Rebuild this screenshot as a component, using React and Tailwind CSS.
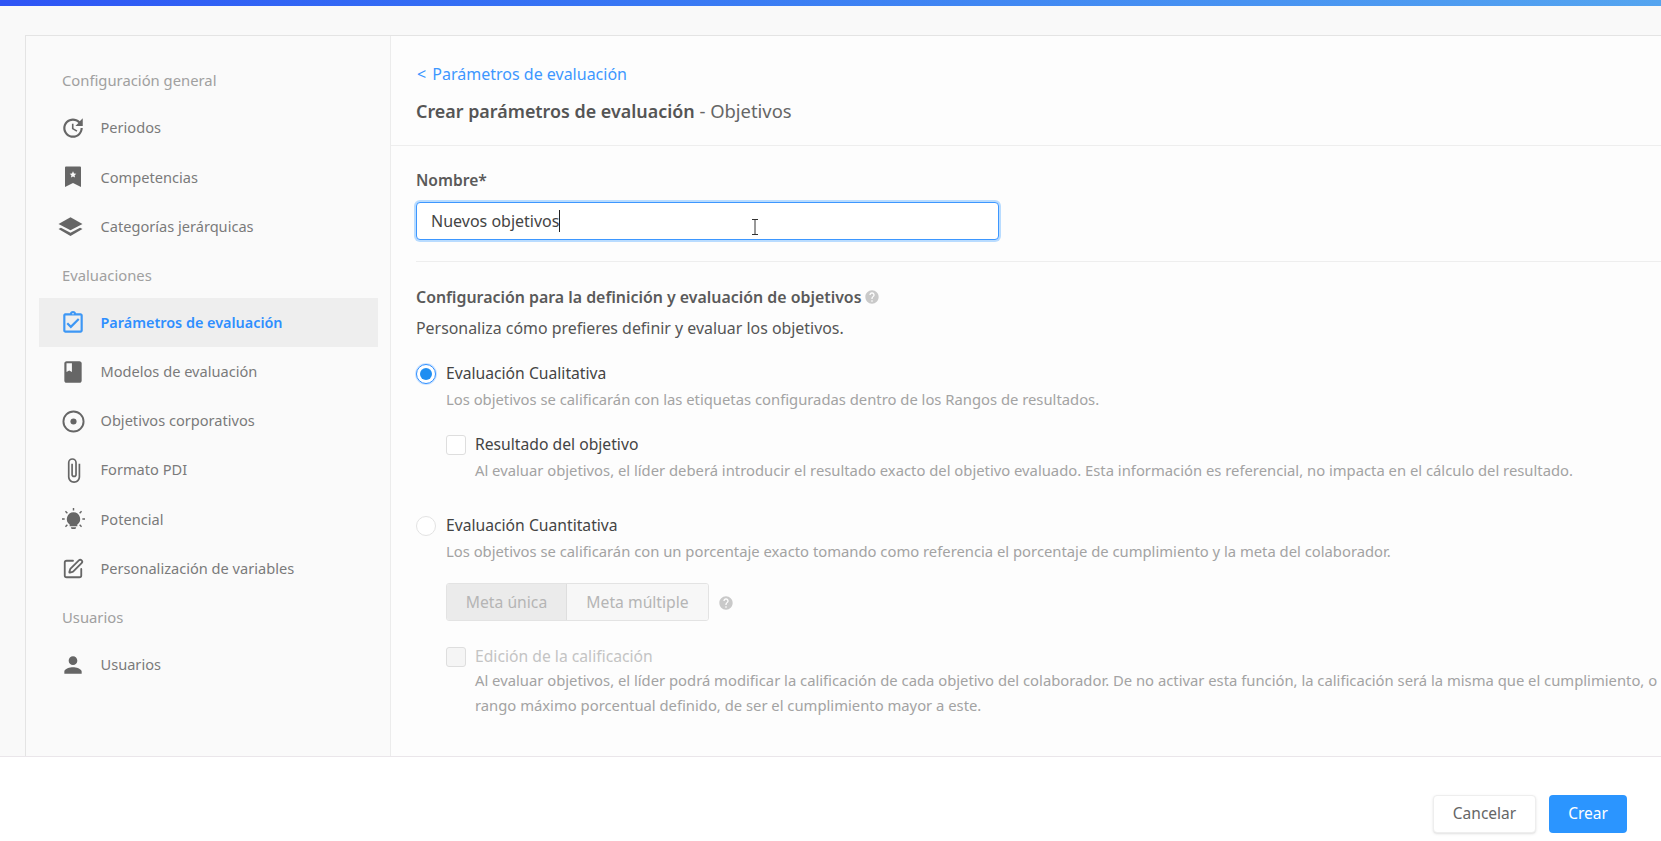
import React from 'react';
import { MdUpdate, MdOutlineAssignmentTurnedIn, MdBook, MdAttachFile, MdPerson, MdHelp } from 'react-icons/md';
import { SquarePen } from 'lucide-react';

// Bookmark with a small star, no package has this one
const BookmarkStar = ({ className }) => (
    <svg viewBox="0 0 24 24" className={className} fill="currentColor">
        <path fillRule="evenodd" d="M5 1.5h14a1 1 0 0 1 1 1V22l-8-4-8 4V2.5a1 1 0 0 1 1-1Zm7 4.700-1 2.200-2.300.3 1.700 1.600-.4 2.300 2-1.200 2 1.200-.4-2.300 1.700-1.600-2.300-.3-1-2.200Z" />
    </svg>
);

const FlatLayers = ({ className }) => (
    <svg viewBox="0 0 24 24" className={className} fill="currentColor">
        <path d="M12 3 23.500 9.500 12 15.500.5 9.500 12 3Z" />
        <path d="M2.800 13.200.5 14.500 12 21l11.500-6.500-2.300-1.300L12 18 2.800 13.200Z" />
    </svg>
);

const TargetDot = ({ className }) => (
    <svg viewBox="0 0 24 24" className={className} fill="none" stroke="currentColor">
        <circle cx="12" cy="12" r="10.500" strokeWidth="2" />
        <circle cx="12" cy="12" r="3.200" fill="currentColor" stroke="none" />
    </svg>
);

const Bulb = ({ className }) => (
    <svg viewBox="0 0 24 24" className={className} fill="currentColor">
        <path d="M12 4.500a7 7 0 0 0-4 12.700V19h8v-1.800a7 7 0 0 0-4-12.700ZM9.200 20h5.600l-.8 1.800h-4L9.200 20Z" />
        <path d="M12 0v2.600M0 11.500h2.800M21.200 11.500H24M3.600 3.400l2 2M20.400 3.400l-2 2M3.600 19.600l2-2M20.400 19.600l-2-2" stroke="currentColor" strokeWidth="1.500" fill="none" />
    </svg>
);

const Heading = ({ children }) => (
    <div className="h-[46.5px] pl-[23px] flex items-center text-[14.8px] text-[#a0a0a0]">{children}</div>
);

const Item = ({ icon: Icon, size = 'w-[26px] h-[26px]', shift = '', active, children }) => (
    <div className={`h-[49.3px] pl-[21px] flex items-center ${active ? 'bg-[#eeeeee] text-[#2f8fff] font-semibold' : 'text-[#7a7a7a]'}`}>
        <div className={`w-[26px] flex justify-center shrink-0 ${shift} ${active ? 'text-[#3d97f5]' : 'text-[#666666]'}`}>
            <Icon className={`${size} shrink-0`} />
        </div>
        <span className={`ml-[14.5px] ${active ? 'text-[14.4px]' : 'text-[14.6px]'}`}>{children}</span>
    </div>
);

const Sidebar = () => (
    <aside className="w-[365px] shrink-0 border-r border-[#ececec] pl-[13px] pr-[12px] pt-[21px]">
        <Heading>Configuración general</Heading>
        <Item icon={MdUpdate}>Periodos</Item>
        <Item icon={BookmarkStar} size="w-[24px] h-[24px]">Competencias</Item>
        <Item icon={FlatLayers} shift="-ml-[3px] mr-[3px]" size="w-[25px] h-[25px]">Categorías jerárquicas</Item>
        <Heading>Evaluaciones</Heading>
        <Item icon={MdOutlineAssignmentTurnedIn} active>Parámetros de evaluación</Item>
        <Item icon={MdBook}>Modelos de evaluación</Item>
        <Item icon={TargetDot} size="w-[23px] h-[23px]">Objetivos corporativos</Item>
        <Item icon={MdAttachFile} size="w-[27px] h-[27px]">Formato PDI</Item>
        <Item icon={Bulb} size="w-[23px] h-[23px]">Potencial</Item>
        <Item icon={SquarePen} size="w-[22px] h-[22px]">Personalización de variables</Item>
        <Heading>Usuarios</Heading>
        <Item icon={MdPerson}>Usuarios</Item>
    </aside>
);

const Radio = ({ checked }) => (
    <span className={`w-[20px] h-[20px] rounded-full border bg-white flex items-center justify-center shrink-0 ${checked ? 'border-[#2f8fff] shadow-[0_0_0_1px_#cfe5ff]' : 'border-[#e3e3e3]'}`}>
        {checked && <span className="w-[12px] h-[12px] rounded-full bg-[#1f8ef1]" />}
    </span>
);

const Checkbox = ({ disabled }) => (
    <span className={`w-[20px] h-[20px] rounded-[3px] border border-[#dedede] shrink-0 ${disabled ? 'bg-[#f5f5f5]' : 'bg-white'}`} />
);

const Main = () => (
    <main className="flex-1 min-w-0 overflow-hidden bg-[#fdfdfd]">
        <div className="h-[110px] pl-[25px] pt-[27px] border-b border-[#eeeeee]">
            <a className="block text-[16px] leading-[22px] text-[#3d97ff]">
                <span className="ml-px mr-[2px]">&lt;</span> Parámetros de evaluación
            </a>
            <div className="mt-[15px] text-[18.4px] leading-[22px] text-[#666666]">
                <span className="font-semibold text-[17.9px] text-[#555555]">Crear parámetros de evaluación</span> - Objetivos
            </div>
        </div>

        <div className="pl-[25px]">
            <div className="pt-[23px] text-[15.6px] leading-[22px] font-semibold text-[#5a5a5a]">Nombre*</div>
            <div className="relative mt-[11px] w-[583px] h-[38px] rounded-[4px] border border-[#3d97ff] bg-white shadow-[0_0_0_2px_#b9dcff] flex items-center px-[14px]">
                <span className="text-[16px] text-[#444444] border-r border-[#222222] leading-[22px]">Nuevos objetivos</span>
                <svg viewBox="0 0 8 16" className="absolute left-[334px] top-[16px] w-[8px] h-[16px]" fill="none" stroke="#333333" strokeWidth="1">
                    <path d="M1 .5h6M1 15.500h6M4 .5v15" />
                </svg>
            </div>
            <div className="mt-[21px] h-px bg-[#eeeeee]" />

            <div className="mt-[24px] flex items-center text-[15.9px] leading-[22px] font-semibold text-[#5a5a5a]">
                Configuración para la definición y evaluación de objetivos
                <MdHelp className="ml-[3px] w-[16px] h-[16px] text-[#c9c9c9]" />
            </div>
            <div className="mt-[9px] text-[15.9px] leading-[22px] text-[#555555]">Personaliza cómo prefieres definir y evaluar los objetivos.</div>

            <div className="mt-[24px] flex items-center gap-[10px] h-[22px]">
                <Radio checked />
                <span className="text-[15.7px] text-[#444444]">Evaluación Cualitativa</span>
            </div>
            <div className="ml-[30px] mt-[3px] text-[14.8px] leading-[22px] text-[#a3a3a3] whitespace-nowrap">
                Los objetivos se calificarán con las etiquetas configuradas dentro de los Rangos de resultados.
            </div>

            <div className="ml-[30px] mt-[24px] flex items-center gap-[9px] h-[22px]">
                <Checkbox />
                <span className="text-[15.7px] text-[#444444]">Resultado del objetivo</span>
            </div>
            <div className="ml-[59px] mt-[3px] text-[14.8px] leading-[22px] text-[#a3a3a3] whitespace-nowrap">
                Al evaluar objetivos, el líder deberá introducir el resultado exacto del objetivo evaluado. Esta información es referencial, no impacta en el cálculo del resultado.
            </div>

            <div className="mt-[34px] flex items-center gap-[10px] h-[22px]">
                <Radio />
                <span className="text-[15.7px] text-[#444444]">Evaluación Cuantitativa</span>
            </div>
            <div className="ml-[30px] mt-[3px] text-[14.8px] leading-[22px] text-[#a3a3a3] whitespace-nowrap">
                Los objetivos se calificarán con un porcentaje exacto tomando como referencia el porcentaje de cumplimiento y la meta del colaborador.
            </div>

            <div className="ml-[30px] mt-[21px] flex items-center">
                <div className="flex h-[38px] rounded-[3px] border border-[#e3e3e3] text-[15.7px] text-[#b5b5b5] overflow-hidden">
                    <div className="w-[120px] bg-[#ebebeb] border-r border-[#dedede] flex items-center justify-center pt-px">Meta única</div>
                    <div className="w-[141px] bg-[#f7f7f7] flex items-center justify-center pt-px">Meta múltiple</div>
                </div>
                <MdHelp className="ml-[9px] mt-[2px] w-[16px] h-[16px] text-[#c9c9c9]" />
            </div>

            <div className="ml-[30px] mt-[25px] flex items-center gap-[9px] h-[22px]">
                <Checkbox disabled />
                <span className="text-[15.7px] text-[#c4c4c4]">Edición de la calificación</span>
            </div>
            <div className="ml-[59px] text-[14.8px] leading-[25px] text-[#a3a3a3] whitespace-nowrap">
                Al evaluar objetivos, el líder podrá modificar la calificación de cada objetivo del colaborador. De no activar esta función, la calificación será la misma que el cumplimiento, o<br />
                rango máximo porcentual definido, de ser el cumplimiento mayor a este.
            </div>
        </div>
    </main>
);

const App = () => (
    <div className="h-[841px] w-full overflow-hidden bg-[#f9f9f9] flex flex-col font-['Noto_Sans',sans-serif]">
        <div className="h-[6px] shrink-0 bg-gradient-to-r from-[#2f55f5] to-[#55a5f0]" />
        <div className="h-[29px] shrink-0" />
        <div className="flex-1 min-h-0 ml-[25px] flex border-l border-t border-[#e4e4e4] bg-[#fafafa]">
            <Sidebar />
            <Main />
        </div>
        <footer className="h-[85px] shrink-0 bg-white border-t border-[#eae6ea] flex items-start justify-end pt-[38px] pr-[34px] gap-[13px]">
            <button className="h-[38px] w-[103px] rounded-[4px] border border-[#eeeeee] bg-white shadow-sm text-[15.5px] text-[#666666]">Cancelar</button>
            <button className="h-[38px] w-[78px] rounded-[4px] bg-[#2b95ff] text-[15.5px] text-white">Crear</button>
        </footer>
    </div>
);

export default App;
